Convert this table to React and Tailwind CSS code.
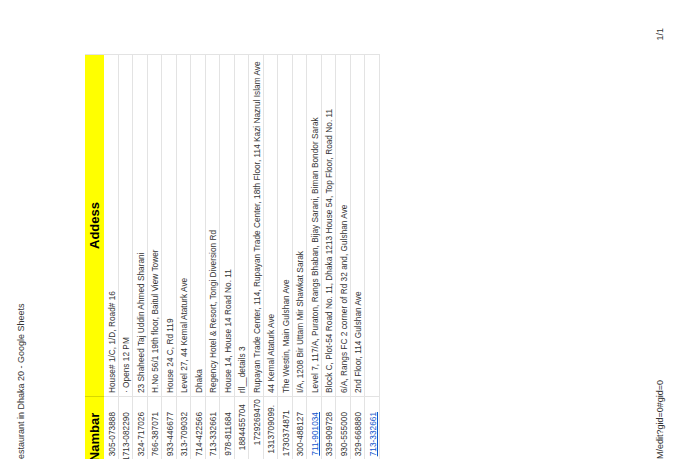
import React from "react";

const rows = [
  { n: "305-073888", a: "House# 1/C, 1/D, Road# 16", pr: "pr-[15px]" },
  { n: "1713-082290", a: "· Opens 12 PM", pr: "pr-[15px]" },
  { n: "324-717026", a: "23 Shaheed Taj Uddin Ahmed Sharani", pr: "pr-[15px]" },
  { n: "766-387071", a: "H.No 56/1 19th floor, Baitul View Tower", pr: "pr-[15px]" },
  { n: "933-446677", a: "House 24 C, Rd 119", pr: "pr-[15px]" },
  { n: "313-709032", a: "Level 27, 44 Kemal Ataturk Ave", pr: "pr-[15px]" },
  { n: "714-422566", a: "Dhaka", pr: "pr-[15px]" },
  { n: "713-332661", a: "Regency Hotel & Resort, Tongi Diversion Rd", pr: "pr-[15px]" },
  { n: "978-811684", a: "House 14, House 14 Road No. 11", pr: "pr-[15px]" },
  { n: "1884455704", a: "rll__details 3", pr: "pr-[7px]" },
  { n: "1729269470", a: "Rupayan Trade Center, 114, Rupayan Trade Center, 18th Floor, 114 Kazi Nazrul Islam Ave", pr: "pr-[2px]" },
  { n: "1313709099.", a: "44 Kemal Ataturk Ave", pr: "pr-[8px]" },
  { n: "1730374871", a: "The Westin, Main Gulshan Ave", pr: "pr-[13px]" },
  { n: "300-488127", a: "I/A, 1208 Bir Uttam Mir Shawkat Sarak", pr: "pr-[15px]" },
  { n: "711-901034", a: "Level 7, 117/A, Puraton, Rangs Bhaban, Bijay Sarani, Biman Bondor Sarak", pr: "pr-[15px]", link: true },
  { n: "339-909728", a: "Block C, Plot-54 Road No. 11, Dhaka 1213 House 54, Top Floor, Road No. 11", pr: "pr-[15px]" },
  { n: "930-555000", a: "6/A, Rangs FC 2 corner of Rd 32 and, Gulshan Ave", pr: "pr-[15px]" },
  { n: "329-668880", a: "2nd Floor, 114 Gulshan Ave", pr: "pr-[15px]" },
  { n: "713-332661", a: "", pr: "pr-[15px]", link: true },
];

export default function App() {
  return (
    <div className="w-[680px] h-[459px] overflow-hidden bg-white font-['Liberation_Sans',Arial,sans-serif]">
      <div className="w-[459px] h-[680px] origin-top-left translate-y-[459px] -rotate-90 flex flex-col bg-white text-[#333]">
        <div className="mt-[15px] h-[12px] text-[9px] leading-[12px] whitespace-nowrap">
          estaurant in Dhaka 20 - Google Sheets
        </div>
        <div className="mt-[58px] ml-[-20px] w-[425px] flex flex-col border-r border-[#e3e3e3]">
          <div className="h-[19px] flex bg-[#ffff00]">
            <div className="w-[82px] flex items-center justify-center font-bold text-[13px] leading-[19px] text-black pl-[2px]">
              Nambar
            </div>
            <div className="flex-1 flex items-center justify-center font-bold text-[13px] leading-[19px] text-black border-l border-[#d8d800]">
              Addess
            </div>
          </div>
          {rows.map((r, i) => (
            <div key={i} className="h-[14.5px] flex border-b border-[#e3e3e3] text-[8.3px] leading-[10px]">
              <div className={`w-[82px] flex items-end justify-end pb-[1px] whitespace-nowrap ${r.pr}`}>
                {r.link ? (
                  <span className="text-[#1155cc] underline">{r.n}</span>
                ) : (
                  <span>{r.n}</span>
                )}
              </div>
              <div className="flex-1 flex items-end pb-[1px] pl-[3px] border-l border-[#e3e3e3] whitespace-nowrap overflow-hidden">
                {r.a}
              </div>
            </div>
          ))}
        </div>
        <div className="mt-auto mb-[14px] h-[12px] flex justify-between items-center text-[9px] leading-[12px] pr-[28px] whitespace-nowrap">
          <span>M/edit?gid=0#gid=0</span>
          <span>1/1</span>
        </div>
      </div>
    </div>
  );
}
